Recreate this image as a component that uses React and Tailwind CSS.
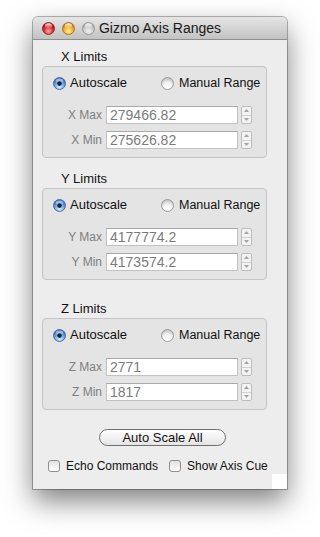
import React from "react";

function Light({ id, inner, mid, outer, rim }) {
  return (
    <svg width="13" height="13" viewBox="0 0 13 13" className="block">
      <defs>
        <radialGradient id={id} cx="50%" cy="72%" r="62%">
          <stop offset="0" stopColor={inner} />
          <stop offset="0.55" stopColor={mid} />
          <stop offset="1" stopColor={outer} />
        </radialGradient>
        <linearGradient id={id + "h"} x1="0" y1="0" x2="0" y2="1">
          <stop offset="0" stopColor="#fff" stopOpacity="0.95" />
          <stop offset="1" stopColor="#fff" stopOpacity="0" />
        </linearGradient>
      </defs>
      <circle cx="6.5" cy="6.5" r="6" fill={`url(#${id})`} stroke={rim} strokeWidth="0.8" />
      <ellipse cx="6.5" cy="3.7" rx="3.7" ry="2.5" fill={`url(#${id}h)`} />
    </svg>
  );
}

function Radio({ on, id }) {
  if (on) {
    return (
      <svg width="13" height="13" viewBox="0 0 13 13" className="block shrink-0">
        <defs>
          <radialGradient id={id} cx="50%" cy="78%" r="65%">
            <stop offset="0" stopColor="#d9efff" />
            <stop offset="0.5" stopColor="#7fb3ef" />
            <stop offset="1" stopColor="#3a70c4" />
          </radialGradient>
        </defs>
        <circle cx="6.5" cy="6.5" r="6" fill={`url(#${id})`} stroke="#3a5a8e" strokeWidth="0.8" />
        <ellipse cx="6.5" cy="3.6" rx="3.6" ry="2.2" fill="#ffffff" fillOpacity="0.45" />
        <circle cx="6.5" cy="6.6" r="2.3" fill="#1b2433" />
      </svg>
    );
  }
  return (
    <svg width="13" height="13" viewBox="0 0 13 13" className="block shrink-0">
      <defs>
        <radialGradient id={id} cx="50%" cy="80%" r="70%">
          <stop offset="0" stopColor="#ffffff" />
          <stop offset="0.6" stopColor="#f0f0f0" />
          <stop offset="1" stopColor="#c8c8c8" />
        </radialGradient>
      </defs>
      <circle cx="6.5" cy="6.5" r="6" fill={`url(#${id})`} stroke="#8a8a8a" strokeWidth="0.8" />
    </svg>
  );
}

function Stepper() {
  return (
    <div className="w-[11px] h-[18px] border border-[#bdbdbd] rounded-[2px] bg-[#f3f3f3] flex flex-col">
      <div className="flex-1 flex items-center justify-center border-b border-[#d2d2d2]">
        <svg width="5" height="3" viewBox="0 0 5 3" className="block">
          <polygon points="2.5,0 5,3 0,3" fill="#a3a3a3" />
        </svg>
      </div>
      <div className="flex-1 flex items-center justify-center">
        <svg width="5" height="3" viewBox="0 0 5 3" className="block">
          <polygon points="0,0 5,0 2.5,3" fill="#a3a3a3" />
        </svg>
      </div>
    </div>
  );
}

function FieldRow({ label, value }) {
  return (
    <div className="flex items-center h-[18px]">
      <div className="w-[59px] text-right text-[12px] leading-[14px] text-[#7f7f7f]">{label}</div>
      <div className="ml-[4px] w-[132px] h-[18px] bg-white border border-[#c2c2c2] border-t-[#a9a9a9] pl-[3px] text-[14px] leading-[16px] text-[#7b7b7b]">
        {value}
      </div>
      <div className="ml-[3px]">
        <Stepper />
      </div>
    </div>
  );
}

function Group({ axis, max, min }) {
  return (
    <div className="ml-[9px] w-[225px] h-[92px] border border-[#c4c4c4] rounded-[4px] bg-[#e4e4e4] pt-[7px]">
      <div className="flex items-center h-[18px] pl-[10px]">
        <div className="w-[108px] flex items-center gap-[4px]">
          <Radio on id={`ron${axis}`} />
          <span className="text-[13px] leading-[16px] text-[#111]">Autoscale</span>
        </div>
        <div className="flex items-center gap-[5px]">
          <Radio id={`roff${axis}`} />
          <span className="text-[12.5px] leading-[16px] text-[#111]">Manual Range</span>
        </div>
      </div>
      <div className="mt-[14px] flex flex-col gap-[7px]">
        <FieldRow label={`${axis} Max`} value={max} />
        <FieldRow label={`${axis} Min`} value={min} />
      </div>
    </div>
  );
}

function Title({ children, className }) {
  return (
    <div className={`ml-[28px] h-[17px] text-[13px] leading-[16px] text-[#111] ${className || ""}`}>{children}</div>
  );
}

function Checkbox({ label }) {
  return (
    <div className="flex items-center gap-[6px]">
      <div className="w-[12px] h-[12px] rounded-[3px] border border-[#8e8e8e] bg-linear-to-b from-[#e2e2e2] to-[#ffffff]" />
      <span className="text-[12px] leading-[16px] text-[#111]">{label}</span>
    </div>
  );
}

export default function App() {
  return (
    <div className="w-[320px] h-[537px] bg-white pt-[17px] pl-[33px] font-['Liberation_Sans',Arial,sans-serif] overflow-hidden">
      <div className="relative w-[254px] h-[472px] rounded-t-[5px] bg-[#ededed] shadow-[0_0_0_1px_rgba(0,0,0,0.28),0_12px_28px_rgba(0,0,0,0.5)]">
        {/* Title bar */}
        <div className="h-[23px] rounded-t-[5px] bg-linear-to-b from-[#e6e6e6] to-[#c2c2c2] border-b border-[#8e8e8e] flex items-center">
          <div className="w-[62px] pl-[9px] flex items-center gap-[7px]">
            <Light id="lr" inner="#ffb0b0" mid="#e2353d" outer="#a3101a" rim="#7e1a1a" />
            <Light id="ly" inner="#fff0a0" mid="#f5b830" outer="#c77a0a" rim="#9a6a12" />
            <Light id="lg" inner="#f2f2f2" mid="#d2d2d2" outer="#a9a9a9" rim="#909090" />
          </div>
          <div className="flex-1 text-center text-[14px] leading-[16px] text-[#1a1a1a]">Gizmo Axis Ranges</div>
          <div className="w-[62px]" />
        </div>

        {/* Content */}
        <div className="pt-[9px]">
          <Title>X Limits</Title>
          <Group axis="X" max="279466.82" min="275626.82" />

          <Title className="mt-[13px]">Y Limits</Title>
          <Group axis="Y" max="4177774.2" min="4173574.2" />

          <Title className="mt-[21px]">Z Limits</Title>
          <Group axis="Z" max="2771" min="1817" />

          <div className="mt-[19px] ml-[66px] w-[127px] h-[17px] rounded-full border border-[#6f6f6f] bg-linear-to-b from-[#ffffff] via-[#f2f2f2] to-[#e4e4e4] flex items-center justify-center text-[13px] leading-[15px] text-[#111]">
            Auto Scale All
          </div>

          <div className="mt-[12px] h-[16px] pl-[15px] flex items-center gap-[11px]">
            <Checkbox label="Echo Commands" />
            <Checkbox label="Show Axis Cue" />
          </div>
        </div>

        <div className="absolute right-0 bottom-0 w-[15px] h-[15px] bg-white" />
      </div>
    </div>
  );
}
